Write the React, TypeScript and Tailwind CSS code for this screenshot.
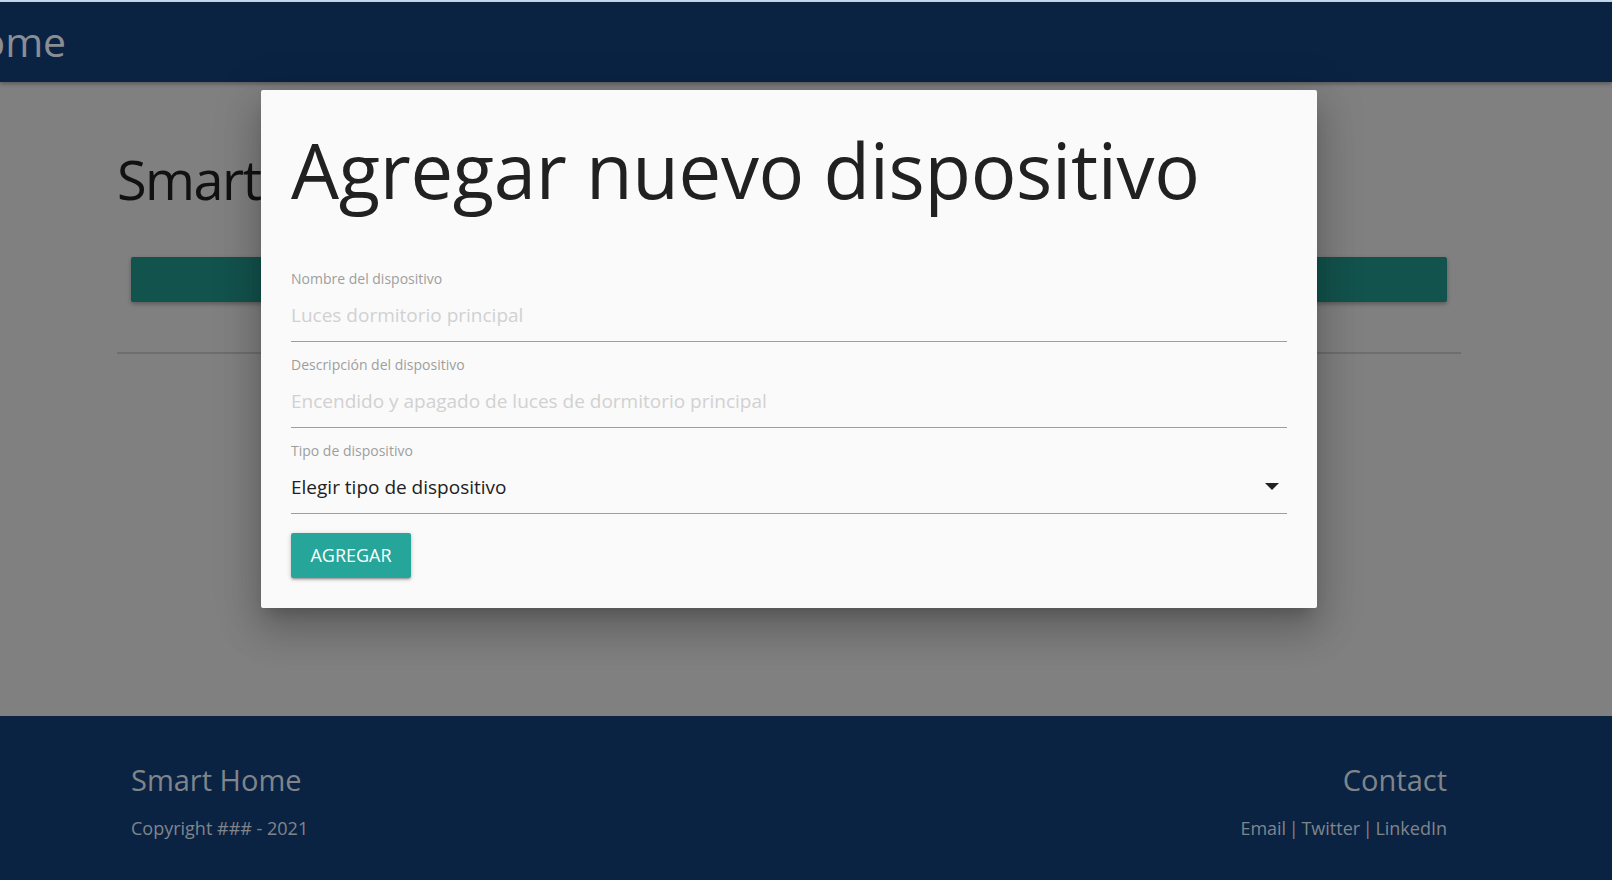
import { useState } from "react";

const font = { fontFamily: '"Open Sans", "Noto Sans", sans-serif' };

function Field({
  label,
  placeholder,
}: {
  label: string;
  placeholder: string;
}) {
  return (
    <div className="flex flex-col">
      <label className="h-5 text-[14px] leading-5 text-[#9e9e9e]">{label}</label>
      <div className="flex h-[53px] items-center border-b border-[#9e9e9e]">
        <input
          className="w-full bg-transparent text-[19px] text-[#212121] outline-none placeholder:text-[#d1d1d1]"
          placeholder={placeholder}
        />
      </div>
    </div>
  );
}

function AddDeviceModal() {
  const [tipo] = useState("Elegir tipo de dispositivo");

  return (
    <div className="absolute left-[261px] top-[90px] w-[1056px] rounded-[2px] bg-[#fafafa] px-[30px] pb-[30px] pt-[36px] shadow-[0_24px_38px_3px_rgba(0,0,0,0.14),0_9px_46px_8px_rgba(0,0,0,0.12),0_11px_15px_-7px_rgba(0,0,0,0.2)]">
      <h1 className="h-[143px] text-[76px] leading-[88px] tracking-[-0.3px] text-[#212121]">
        Agregar nuevo dispositivo
      </h1>

      <div className="flex flex-col gap-[13px]">
        <Field label="Nombre del dispositivo" placeholder="Luces dormitorio principal" />
        <Field
          label="Descripción del dispositivo"
          placeholder="Encendido y apagado de luces de dormitorio principal"
        />
        <div className="flex flex-col">
          <label className="h-5 text-[14px] leading-5 text-[#9e9e9e]">Tipo de dispositivo</label>
          <div className="flex h-[53px] items-center justify-between border-b border-[#9e9e9e]">
            <span className="text-[19px] text-[#212121]">{tipo}</span>
            <svg width="14" height="8" viewBox="0 0 14 8" className="mr-[8px]">
              <path d="M0 0 L14 0 L7 7 Z" fill="#212121" />
            </svg>
          </div>
        </div>
      </div>

      <button className="mt-[19px] h-[45px] w-[120px] rounded-[2px] bg-[#26a69a] text-[18px] uppercase text-white shadow-[0_2px_2px_0_rgba(0,0,0,0.14),0_3px_1px_-2px_rgba(0,0,0,0.12),0_1px_5px_0_rgba(0,0,0,0.2)]">
        Agregar
      </button>
    </div>
  );
}

export default function App() {
  return (
    <div className="relative flex h-[880px] flex-col overflow-hidden bg-[#808080]" style={font}>
      <div className="h-[2px] bg-[#c6daf0]" />
      <nav className="flex h-[80px] items-center overflow-hidden bg-[#0b2343] shadow-[0_2px_4px_rgba(0,0,0,0.3)]">
        <span className="ml-[-175px] whitespace-nowrap text-[41px] text-[#8a8e94]">Smart Home</span>
      </nav>

      <main className="flex-1">
        <div className="ml-[117px] w-[1344px]">
          <h3 className="pt-[57px] text-[54px] leading-[80px] tracking-[-1.5px] text-[#111111]">
            Smart Home
          </h3>
          <div className="px-[14px] pt-[38px]">
            <div className="h-[45px] rounded-[2px] bg-[#13534d] shadow-[0_2px_4px_rgba(0,0,0,0.3)]" />
          </div>
          <hr className="mt-[50px] border-t-2 border-[#6e6e6e]" />
        </div>
      </main>

      <footer className="h-[164px] bg-[#0b2343]">
        <div className="ml-[131px] flex w-[1316px] justify-between pt-[44px] text-[#80858b]">
          <div className="flex flex-col">
            <h5 className="text-[29px] leading-[40px]">Smart Home</h5>
            <p className="mt-[14px] text-[18px] leading-[28px]">Copyright ### - 2021</p>
          </div>
          <div className="flex flex-col items-end">
            <h5 className="text-[29px] leading-[40px]">Contact</h5>
            <p className="mt-[14px] text-[18px] leading-[28px] [word-spacing:-2px]">
              <a>Email</a> | <a>Twitter</a> | <a>LinkedIn</a>
            </p>
          </div>
        </div>
      </footer>

      <AddDeviceModal />
    </div>
  );
}
